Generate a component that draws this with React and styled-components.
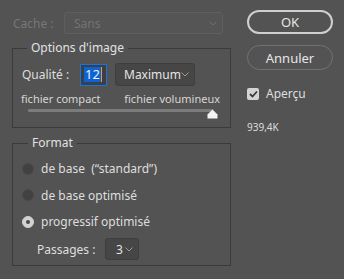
import React from 'react';
import styled, { createGlobalStyle } from 'styled-components';

const GlobalStyle = createGlobalStyle`
  html, body {
    margin: 0;
    padding: 0;
    background: #535353;
  }
  body {
    font-family: 'Noto Sans', 'Open Sans', sans-serif;
    color: #dedede;
    font-size: 12px;
  }
`

const Dialog = styled.div`
  width: 344px;
  height: 279px;
  display: flex;
  box-sizing: border-box;
  padding-left: 12px;
  overflow: hidden;
`

const LeftColumn = styled.div`
  width: 219px;
  display: flex;
  flex-direction: column;
`

const RightColumn = styled.div`
  margin-left: 16px;
  width: 86px;
  padding-top: 10px;
  display: flex;
  flex-direction: column;
`

const CacheRow = styled.div`
  display: flex;
  align-items: center;
  margin-top: 12px;
  height: 22px;
  padding-left: 1px;
`

const Label = styled.span`
  color: ${p => (p.disabled ? '#777777' : '#dedede')};
  font-size: ${p => p.size || 12}px;
  white-space: pre;
  width: ${p => (p.w ? `${p.w}px` : 'auto')};
  flex-shrink: 0;
`

const Select = styled.div`
  box-sizing: border-box;
  display: flex;
  align-items: center;
  justify-content: space-between;
  flex-shrink: 0;
  width: ${p => p.width}px;
  height: ${p => p.height || 22}px;
  margin-left: ${p => p.offset || 0}px;
  padding: 0 5px 0 ${p => p.pad || 9}px;
  border-radius: 3px;
  border: 1px solid ${p => (p.disabled ? '#5f5f5f' : '#3e3e3e')};
  background: ${p => (p.disabled ? '#555555' : '#464646')};
  color: ${p => (p.disabled ? '#737373' : '#e4e4e4')};
  font-size: 12px;
`

const Chevron = ({ color }) => (
  <svg width="8" height="5" viewBox="0 0 8 5">
    <polyline points="0.5,0.5 4,4 7.5,0.5" fill="none" stroke={color} strokeWidth="1" />
  </svg>
)

const Group = styled.fieldset`
  margin: ${p => p.top}px 0 0 0;
  padding: ${p => p.pad};
  border: 1px solid #3b3b3b;
  height: ${p => p.height}px;
  box-sizing: border-box;
  min-width: 0;
`

const Legend = styled.legend`
  margin-left: ${p => p.indent}px;
  padding: 0 4px;
  font-size: 12px;
  line-height: 16px;
  color: #e2e2e2;
`

const QualityRow = styled.div`
  display: flex;
  align-items: center;
  margin-top: 7px;
`

const QualityInput = styled.div`
  box-sizing: border-box;
  width: 27px;
  height: 22px;
  border: 1px solid #1473e6;
  background: #3f3f3f;
  display: flex;
  align-items: center;
  padding-left: 3px;
  flex-shrink: 0;
`

const Selected = styled.span`
  background: #0c63d4;
  color: #f2f2f2;
  font-size: 13px;
  line-height: 15px;
  padding: 0 1px;
`

const Caret = styled.span`
  width: 1px;
  height: 15px;
  background: #f29a2e;
`

const ScaleLabels = styled.div`
  display: flex;
  justify-content: space-between;
  margin-top: 6px;
  margin-left: -1px;
  margin-right: -2px;
  font-size: 11px;
  color: #d6d6d6;
  line-height: 14px;
`

const Slider = styled.div`
  position: relative;
  margin: 2px 0 0 6px;
  width: 185px;
  height: 10px;
`

const Track = styled.div`
  margin-top: 3px;
  height: 3px;
  background: #7b7b7b;
  border-radius: 1px;
`

const Thumb = styled.svg`
  position: absolute;
  right: -5px;
  top: 0;
`

const RadioRow = styled.div`
  display: flex;
  align-items: center;
  height: ${p => p.h}px;
  gap: 7px;
`

const Radio = styled.span`
  box-sizing: border-box;
  width: 12px;
  height: 12px;
  border-radius: 50%;
  background: ${p => (p.checked ? '#d2d2d2' : '#414141')};
  border: 1px solid ${p => (p.checked ? '#d2d2d2' : '#4a4a4a')};
  display: flex;
  align-items: center;
  justify-content: center;

  &::after {
    content: '';
    display: ${p => (p.checked ? 'block' : 'none')};
    width: 4px;
    height: 4px;
    border-radius: 50%;
    background: #4a4a4a;
  }
`

const PassRow = styled.div`
  display: flex;
  align-items: center;
  margin-top: 3px;
  padding-left: 15px;
`

const PillButton = styled.div`
  box-sizing: border-box;
  height: ${p => p.h}px;
  border-radius: 13px;
  border: ${p => (p.primary ? '2px solid #cfcfcf' : '1px solid #727272')};
  display: flex;
  align-items: center;
  justify-content: center;
  font-size: 13px;
  color: #e6e6e6;
  margin-top: ${p => p.gap || 0}px;
`

const CheckRow = styled.div`
  display: flex;
  align-items: center;
  gap: 7px;
  margin-top: 15px;
`

const CheckBox = styled.span`
  width: 12px;
  height: 12px;
  border-radius: 2px;
  background: #d4d4d4;
  display: flex;
  align-items: center;
  justify-content: center;
`

const Size = styled.div`
  margin-top: 18px;
  font-size: 10px;
  color: #dcdcdc;
`

const formats = [
  { label: 'de base  (“standard”)', h: 27 },
  { label: 'de base optimisé', h: 26 },
  { label: 'progressif optimisé', h: 27, checked: true },
]

const App = () => (
  <Dialog>
    <GlobalStyle />
    <LeftColumn>
      <CacheRow>
        <Label disabled w={51}>Cache :</Label>
        <Select width={159} disabled>
          Sans
          <Chevron color="#6f6f6f" />
        </Select>
      </CacheRow>

      <Group top={6} height={88} pad="0 12px 0 9px">
        <Legend indent={5}>Options d'image</Legend>
        <QualityRow>
          <Label w={58}>Qualité :</Label>
          <QualityInput>
            <Selected>12</Selected>
            <Caret />
          </QualityInput>
          <Select width={80} height={23} offset={8} pad={8}>
            Maximum
            <Chevron color="#9a9a9a" />
          </Select>
        </QualityRow>
        <ScaleLabels>
          <span>fichier compact</span>
          <span>fichier volumineux</span>
        </ScaleLabels>
        <Slider>
          <Track />
          <Thumb width="11" height="10" viewBox="0 0 11 10">
            <path d="M5.5 0.5 L10.5 5.5 L10.5 9.5 L0.5 9.5 L0.5 5.5 Z" fill="#f4f4f4" />
          </Thumb>
        </Slider>
      </Group>

      <Group top={7} height={131} pad="4px 12px 0 9px">
        <Legend indent={6}>Format</Legend>
        {formats.map(f => (
          <RadioRow key={f.label} h={f.h}>
            <Radio checked={f.checked} />
            <Label>{f.label}</Label>
          </RadioRow>
        ))}
        <PassRow>
          <Label w={68}>Passages :</Label>
          <Select width={34} pad={10}>
            3
            <Chevron color="#9a9a9a" />
          </Select>
        </PassRow>
      </Group>
    </LeftColumn>

    <RightColumn>
      <PillButton primary h={24}>OK</PillButton>
      <PillButton h={25} gap={11}>Annuler</PillButton>
      <CheckRow>
        <CheckBox>
          <svg width="9" height="8" viewBox="0 0 9 8">
            <polyline points="1,4 3.5,6.5 8,1.5" fill="none" stroke="#3a3a3a" strokeWidth="1.8" />
          </svg>
        </CheckBox>
        <Label>Aperçu</Label>
      </CheckRow>
      <Size>939,4K</Size>
    </RightColumn>
  </Dialog>
)

export default App;
